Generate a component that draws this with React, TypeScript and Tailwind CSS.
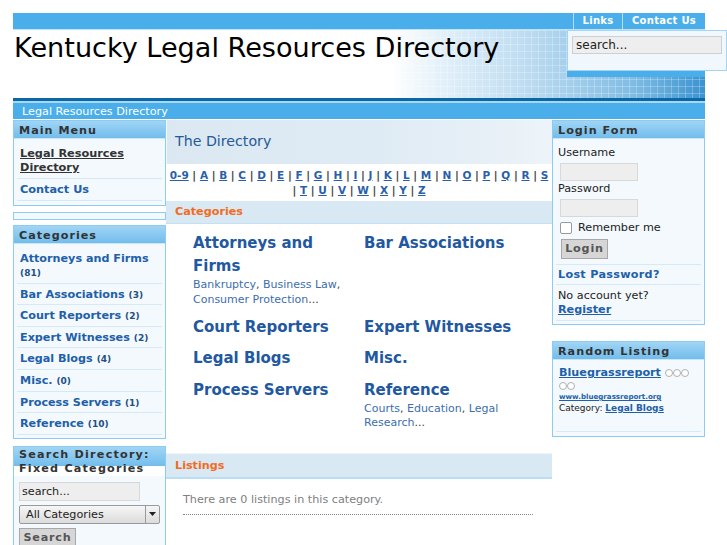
import React from 'react';

const letters1 = ['0-9', 'A', 'B', 'C', 'D', 'E', 'F', 'G', 'H', 'I', 'J', 'K', 'L', 'M', 'N', 'O', 'P', 'Q', 'R', 'S'];
const letters2 = ['T', 'U', 'V', 'W', 'X', 'Y', 'Z'];

const categories = [
  { name: 'Attorneys and Firms', subs: ['Bankruptcy', 'Business Law', 'Consumer Protection'] },
  { name: 'Bar Associations' },
  { name: 'Court Reporters' },
  { name: 'Expert Witnesses' },
  { name: 'Legal Blogs' },
  { name: 'Misc.' },
  { name: 'Process Servers' },
  { name: 'Reference', subs: ['Courts', 'Education', 'Legal Research'] },
];

const sideCats = [
  ['Attorneys and Firms', '81'],
  ['Bar Associations', '3'],
  ['Court Reporters', '2'],
  ['Expert Witnesses', '2'],
  ['Legal Blogs', '4'],
  ['Misc.', '0'],
  ['Process Servers', '1'],
  ['Reference', '10'],
];

function Box({ title, children, className = '' }: { title: string; children?: React.ReactNode; className?: string }) {
  return (
    <div className={`border border-[#8ecbf0] bg-[#f3f9fd] ${className}`}>
      <div className="h-[18px] bg-[linear-gradient(#a0d5f5,#72bdec)] border-b border-[#c9e7f9] px-[5px] text-[11.2px] font-bold tracking-[1px] text-[#333] leading-[19px]">
        {title}
      </div>
      {children}
    </div>
  );
}

function Circles({ n }: { n: number }) {
  return (
    <span className="inline-flex align-middle">
      {Array.from({ length: n }).map((_, i) => (
        <span key={i} className="inline-block w-[8px] h-[8px] rounded-full border-[1.5px] border-[#b0b0b0] bg-white" />
      ))}
    </span>
  );
}

export default function App() {
  return (
    <div className="h-[545px] overflow-hidden bg-white font-['DejaVu_Sans',sans-serif] text-[11.2px] text-[#222]">
      <div className="ml-[13px] w-[692px] pt-[13px]">
        {/* Top bar */}
        <div className="h-[17px] bg-[#4aaeea] border-b border-[#bfe3f9] flex justify-end">
          <div className="w-[49px] border-l border-[#b3def8] text-center text-[10px] font-bold tracking-[0.3px] text-white leading-[16px]">Links</div>
          <div className="w-[83px] border-l border-[#b3def8] text-center text-[10px] font-bold tracking-[0.3px] text-white leading-[16px]">Contact Us</div>
        </div>

        {/* Header */}
        <div className="relative h-[68px] bg-[image:repeating-linear-gradient(90deg,rgba(255,255,255,.25)_0_1px,transparent_1px_7px),repeating-linear-gradient(180deg,rgba(255,255,255,.25)_0_1px,transparent_1px_7px),linear-gradient(90deg,#fff_0px,#fff_378px,#e2f0f9_430px,#badaf0_520px,#80bce4_620px,#3a93d0_692px)]">
          <h1 className="pl-[1px] pt-[2px] text-[27.1px] leading-[31px] font-normal text-black">Kentucky Legal Resources Directory</h1>
          <div className="absolute left-[554px] top-[0px] w-[160px] h-[41px] border border-[#a5d3f1] bg-[#f1f8fd] pl-[4px] pt-[5px]">
            <div className="w-[150px] h-[18px] border border-[#cfcfcf] bg-[#eeeeee] pl-[3px] text-[12px] leading-[16px] text-[#222]">search...</div>
          </div>
          <div className="absolute left-[554px] top-[41px] w-[138px] h-[6px] bg-[#4aaeea]" />
        </div>
        <div className="h-[3px] bg-[#0b68a6]" />
        <div className="h-[2px] bg-[#a8d6f4]" />
        <div className="h-[16px] bg-[#4aaeea] pl-[9px] text-[11.2px] leading-[17px] text-white">Legal Resources Directory</div>

        {/* Columns */}
        <div className="mt-[1px] flex items-start">
          {/* Left */}
          <div className="w-[153px] shrink-0">
            <Box title="Main Menu">
              <div className="mx-[3px] pt-[4px] pb-[4px]">
                <div className="border-b border-[#d5eaf7] px-[3px] pt-[4px] pb-[3px] leading-[14px] font-bold text-[11.3px] text-[#333] underline">
                  Legal Resources Directory
                </div>
                <div className="border-b border-[#d5eaf7] px-[3px] pt-[4px] pb-[3px] leading-[14px] font-bold text-[11.3px] text-[#2160a8]">
                  Contact Us
                </div>
              </div>
            </Box>
            <div className="mt-[6px] h-[8px] border border-[#8ecbf0] bg-[#f3f9fd]" />
            <Box title="Categories" className="mt-[5px]">
              <div className="mx-[3px] pt-[4px] pb-[3px]">
                {sideCats.map(([n, c]) => (
                  <div key={n} className="border-b border-[#d5eaf7] px-[3px] pt-[4px] pb-[2.6px] leading-[14px] font-bold text-[11.2px] text-[#2160a8]">
                    {n} <span className="text-[9px] text-[#234f85]">({c})</span>
                  </div>
                ))}
              </div>
            </Box>
            <div className="mt-[7px] border border-[#8ecbf0] bg-[#f3f9fd]">
              <div className="bg-white bg-[linear-gradient(#a0d5f5,#72bdec)] bg-no-repeat bg-[length:100%_19px] px-[5px] pt-[1px] text-[11.2px] font-bold tracking-[1.2px] text-[#333] leading-[14px]">
                Search Directory:<br />Fixed Categories
              </div>
              <div className="px-[5px] pt-[6px]">
                <div className="w-[121px] h-[19px] border border-[#d8d8d8] bg-[#eeeeee] pl-[2px] text-[11.2px] leading-[17px] text-[#222]">search...</div>
                <div className="mt-[4px] w-[141px] h-[19px] rounded-[2px] border border-[#9a9a9a] bg-[linear-gradient(#f6f6f6,#dcdcdc)] flex">
                  <div className="flex-1 pl-[6px] text-[11.2px] leading-[17px] text-[#222]">All Categories</div>
                  <div className="w-[14px] border-l border-[#9a9a9a] flex items-center justify-center">
                    <svg width="7" height="4" viewBox="0 0 7 4"><path d="M0 0h7L3.5 4z" fill="#222" /></svg>
                  </div>
                </div>
                <div className="mt-[4px] w-[57px] h-[20px] border border-[#a8a8a8] bg-[#d6d6d6] text-center text-[11.2px] font-bold tracking-[0.8px] leading-[18px] text-[#555]">Search</div>
              </div>
            </div>
          </div>

          {/* Center */}
          <div className="w-[386px] shrink-0">
            <div className="h-[44px] border-l border-[#f2f8fc] bg-[linear-gradient(90deg,#dbe8f2_0%,#dfebf4_55%,#e6eff6_80%,#edf4f9_100%)] pl-[8px] text-[14.2px] leading-[42px] text-[#245a96]">
              The Directory
            </div>
            <div className="pt-[4px] pb-[3px] text-center text-[10.5px] font-bold leading-[15px]">
              <div>
                {letters1.map((l, i) => (
                  <React.Fragment key={l}>
                    {i > 0 && <span className="text-[#444]"> | </span>}
                    <span className="underline text-[#2a5fa8]">{l}</span>
                  </React.Fragment>
                ))}
              </div>
              <div>
                {letters2.map((l) => (
                  <React.Fragment key={l}>
                    <span className="text-[#444]">| </span>
                    <span className="underline text-[#2a5fa8]">{l}</span>
                    <span> </span>
                  </React.Fragment>
                ))}
              </div>
            </div>
            <div className="h-[23px] bg-[#d9e9f3] border-b border-[#c3e1f4] pl-[9px] text-[11.2px] font-bold leading-[22px] text-[#f26c1d]">Categories</div>
            <div className="grid grid-cols-[171px_160px] gap-y-[8.5px] pl-[27px] pt-[8px]">
              {categories.map((c) => (
                <div key={c.name}>
                  <div className="text-[15px] font-bold leading-[23px] text-[#2258a0]">{c.name}</div>
                  {c.subs && (
                    <div className="text-[11px] leading-[14.5px] text-[#444]">
                      {c.subs.map((s, i) => (
                        <React.Fragment key={s}>
                          <span className="text-[#3b6eae]">{s}</span>
                          {i < c.subs!.length - 1 ? ', ' : '...'}
                        </React.Fragment>
                      ))}
                    </div>
                  )}
                </div>
              ))}
            </div>
            <div className="mt-[22px] h-[26px] border-t border-[#eef5fa] bg-[#d9e9f3] border-b-2 border-b-[#b9ddf5] pl-[9px] text-[11.2px] font-bold leading-[23px] text-[#f26c1d]">Listings</div>
            <div className="pl-[17px] pt-[14px] text-[11.2px] leading-[14px] text-[#808080]">There are 0 listings in this category.</div>
            <div className="ml-[17px] mt-[7px] w-[350px] border-b border-dotted border-[#888]" />
          </div>

          {/* Right */}
          <div className="w-[153px] shrink-0">
            <Box title="Login Form">
              <div className="px-[5px] pt-[7px] leading-[14px] text-[11.2px] text-[#222]">
                <div>Username</div>
                <div className="ml-[2px] mt-[3px] w-[78px] h-[18px] border border-[#d8d8d8] bg-[#eeeeee]" />
                <div className="mt-[1px]">Password</div>
                <div className="ml-[2px] mt-[3px] w-[78px] h-[18px] border border-[#d8d8d8] bg-[#eeeeee]" />
                <div className="mt-[4px] flex items-center gap-[6px] ml-[2px]">
                  <span className="w-[12px] h-[12px] rounded-[2px] border border-[#9a9a9a] bg-white" />
                  <span>Remember me</span>
                </div>
                <div className="ml-[3px] mt-[4px] w-[47px] h-[20px] border border-[#a8a8a8] bg-[#d6d6d6] text-center font-bold tracking-[0.8px] leading-[18px] text-[#555]">Login</div>
              </div>
              <div className="mx-[3px] mt-[5px] pb-[3px]">
                <div className="border-t border-b border-[#d5eaf7] px-[2px] pt-[3px] pb-[2px] leading-[14px] font-bold text-[#2160a8] tracking-[0.3px]">Lost Password?</div>
                <div className="border-b border-[#d5eaf7] px-[2px] pt-[4px] pb-[3px] leading-[14px] text-[#222]">
                  No account yet?<br />
                  <span className="font-bold underline text-[#2160a8]">Register</span>
                </div>
              </div>
            </Box>
            <Box title="Random Listing" className="mt-[16px]">
              <div className="mx-[3px] px-[3px] pt-[6px] pb-[17px] border-b border-[#d5eaf7]">
                <div className="leading-[14px]">
                  <span className="font-bold underline text-[11.2px] text-[#2160a8]">Bluegrassreport</span>{' '}
                  <Circles n={3} />
                </div>
                <div className="leading-[12px]"><Circles n={2} /></div>
                <div className="text-[7.1px] font-bold underline leading-[10px] text-[#2160a8]">www.bluegrassreport.org</div>
                <div className="text-[9px] leading-[12px] text-[#222]">
                  Category: <span className="font-bold underline text-[#2160a8]">Legal Blogs</span>
                </div>
              </div>
              <div className="h-[4px]" />
            </Box>
          </div>
        </div>
      </div>
    </div>
  );
}
